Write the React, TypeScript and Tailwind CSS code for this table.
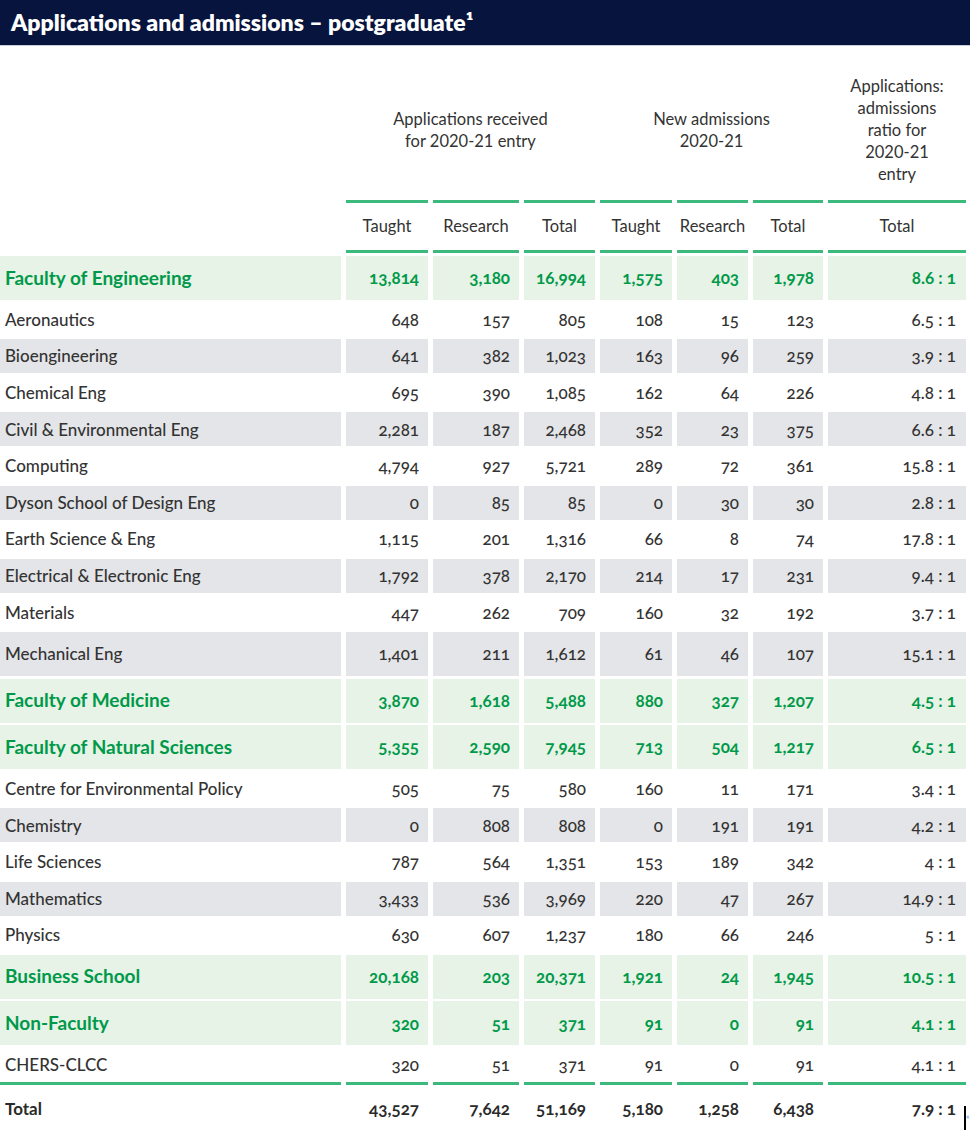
import React from "react";

type Row = { label: string; kind: "fac" | "row"; v: string[]; gray?: boolean; tall?: boolean; last?: boolean };

const rows: Row[] = [
  { label: "Faculty of Engineering", kind: "fac", v: ["13,814", "3,180", "16,994", "1,575", "403", "1,978", "8.6 : 1"] },
  { label: "Aeronautics", kind: "row", v: ["648", "157", "805", "108", "15", "123", "6.5 : 1"] },
  { label: "Bioengineering", kind: "row", gray: true, v: ["641", "382", "1,023", "163", "96", "259", "3.9 : 1"] },
  { label: "Chemical Eng", kind: "row", v: ["695", "390", "1,085", "162", "64", "226", "4.8 : 1"] },
  { label: "Civil & Environmental Eng", kind: "row", gray: true, v: ["2,281", "187", "2,468", "352", "23", "375", "6.6 : 1"] },
  { label: "Computing", kind: "row", v: ["4,794", "927", "5,721", "289", "72", "361", "15.8 : 1"] },
  { label: "Dyson School of Design Eng", kind: "row", gray: true, v: ["0", "85", "85", "0", "30", "30", "2.8 : 1"] },
  { label: "Earth Science & Eng", kind: "row", v: ["1,115", "201", "1,316", "66", "8", "74", "17.8 : 1"] },
  { label: "Electrical & Electronic Eng", kind: "row", gray: true, v: ["1,792", "378", "2,170", "214", "17", "231", "9.4 : 1"] },
  { label: "Materials", kind: "row", v: ["447", "262", "709", "160", "32", "192", "3.7 : 1"] },
  { label: "Mechanical Eng", kind: "row", gray: true, tall: true, v: ["1,401", "211", "1,612", "61", "46", "107", "15.1 : 1"] },
  { label: "Faculty of Medicine", kind: "fac", v: ["3,870", "1,618", "5,488", "880", "327", "1,207", "4.5 : 1"] },
  { label: "Faculty of Natural Sciences", kind: "fac", v: ["5,355", "2,590", "7,945", "713", "504", "1,217", "6.5 : 1"] },
  { label: "Centre for Environmental Policy", kind: "row", v: ["505", "75", "580", "160", "11", "171", "3.4 : 1"] },
  { label: "Chemistry", kind: "row", gray: true, v: ["0", "808", "808", "0", "191", "191", "4.2 : 1"] },
  { label: "Life Sciences", kind: "row", v: ["787", "564", "1,351", "153", "189", "342", "4 : 1"] },
  { label: "Mathematics", kind: "row", gray: true, v: ["3,433", "536", "3,969", "220", "47", "267", "14.9 : 1"] },
  { label: "Physics", kind: "row", v: ["630", "607", "1,237", "180", "66", "246", "5 : 1"] },
  { label: "Business School", kind: "fac", v: ["20,168", "203", "20,371", "1,921", "24", "1,945", "10.5 : 1"] },
  { label: "Non-Faculty", kind: "fac", v: ["320", "51", "371", "91", "0", "91", "4.1 : 1"] },
  { label: "CHERS-CLCC", kind: "row", last: true, v: ["320", "51", "371", "91", "0", "91", "4.1 : 1"] },
];

const total: string[] = ["43,527", "7,642", "51,169", "5,180", "1,258", "6,438", "7.9 : 1"];

const cols = "grid grid-cols-[341px_82px_86px_71px_72px_71px_70px_138px] gap-x-[5px]";

function DataRow({ r }: { r: Row }) {
  const bg = r.kind === "fac" ? "bg-[#e7f3e6]" : r.gray ? "bg-[#e4e5e8]" : "bg-white";
  const h = r.kind === "fac" || r.tall ? "h-[44px]" : r.last ? "h-[37px] border-b-[3px] border-[#3cb97c]" : "h-[34px]";
  const label = r.kind === "fac" ? "text-[19px] font-bold text-[#00994a]" : "text-[17px] font-medium text-[#333]";
  const num = r.kind === "fac" ? "font-bold text-[#00994a]" : "font-medium text-[#333]";
  return (
    <div className={cols}>
      <div className={`${bg} ${h} flex items-center pl-[5px] ${label}`}>{r.label}</div>
      {r.v.map((n, i) => (
        <div key={i} className={`${bg} ${h} flex items-center justify-end ${i === 6 ? "pr-[10px]" : "pr-[9px]"} text-[17px] oldstyle-nums ${num}`}>
          {n}
        </div>
      ))}
    </div>
  );
}

export default function App() {
  return (
    <div className="w-[970px] h-[1134px] bg-white overflow-hidden relative font-['Lato','Liberation_Sans',sans-serif]">
      <div className="h-[46px] bg-[#07143d] border-b border-[#c9cdd8] flex items-center pl-[11px]">
        <h1 className="text-white font-extrabold text-[23px]">Applications and admissions – postgraduate¹</h1>
      </div>

      {/* group headers */}
      <div className={`${cols} h-[154px] text-[16.5px] leading-[22px] text-[#333]`}>
        <div />
        <div className="col-span-3 flex items-center justify-center text-center pt-[14px]">
          Applications received
          <br />
          for 2020-21 entry
        </div>
        <div className="col-span-3 flex items-center justify-center text-center pt-[14px]">
          New admissions
          <br />
          2020-21
        </div>
        <div className="flex items-center justify-center text-center pt-[14px]">
          Applications:
          <br />
          admissions
          <br />
          ratio for
          <br />
          2020-21
          <br />
          entry
        </div>
      </div>

      {/* column headers */}
      <div className={`${cols} text-[16.5px] text-[#333]`}>
        <div />
        {["Taught", "Research", "Total", "Taught", "Research", "Total", "Total"].map((t, i) => (
          <div key={i} className="h-[53px] border-y-[3px] border-[#3cb97c] flex items-center justify-center">
            {t}
          </div>
        ))}
      </div>

      <div className="flex flex-col gap-y-[2.6px] mt-[3px]">
        {rows.map((r) => (
          <DataRow key={r.label} r={r} />
        ))}
      </div>

      <div className={`${cols} h-[48px] font-bold text-[#2a2a2a]`}>
        <div className="flex items-center pl-[5px] text-[17px]">Total</div>
        {total.map((n, i) => (
          <div key={i} className={`flex items-center justify-end ${i === 6 ? "pr-[10px]" : "pr-[9px]"} text-[17px] oldstyle-nums`}>
            {n}
          </div>
        ))}
      </div>

      <div className="absolute left-[964px] top-[1106px] w-[2px] h-[24px] bg-black" />
      <div className="absolute left-[966px] top-[1112px] text-[8px] leading-none text-[#3b8fe0]">«</div>
    </div>
  );
}
